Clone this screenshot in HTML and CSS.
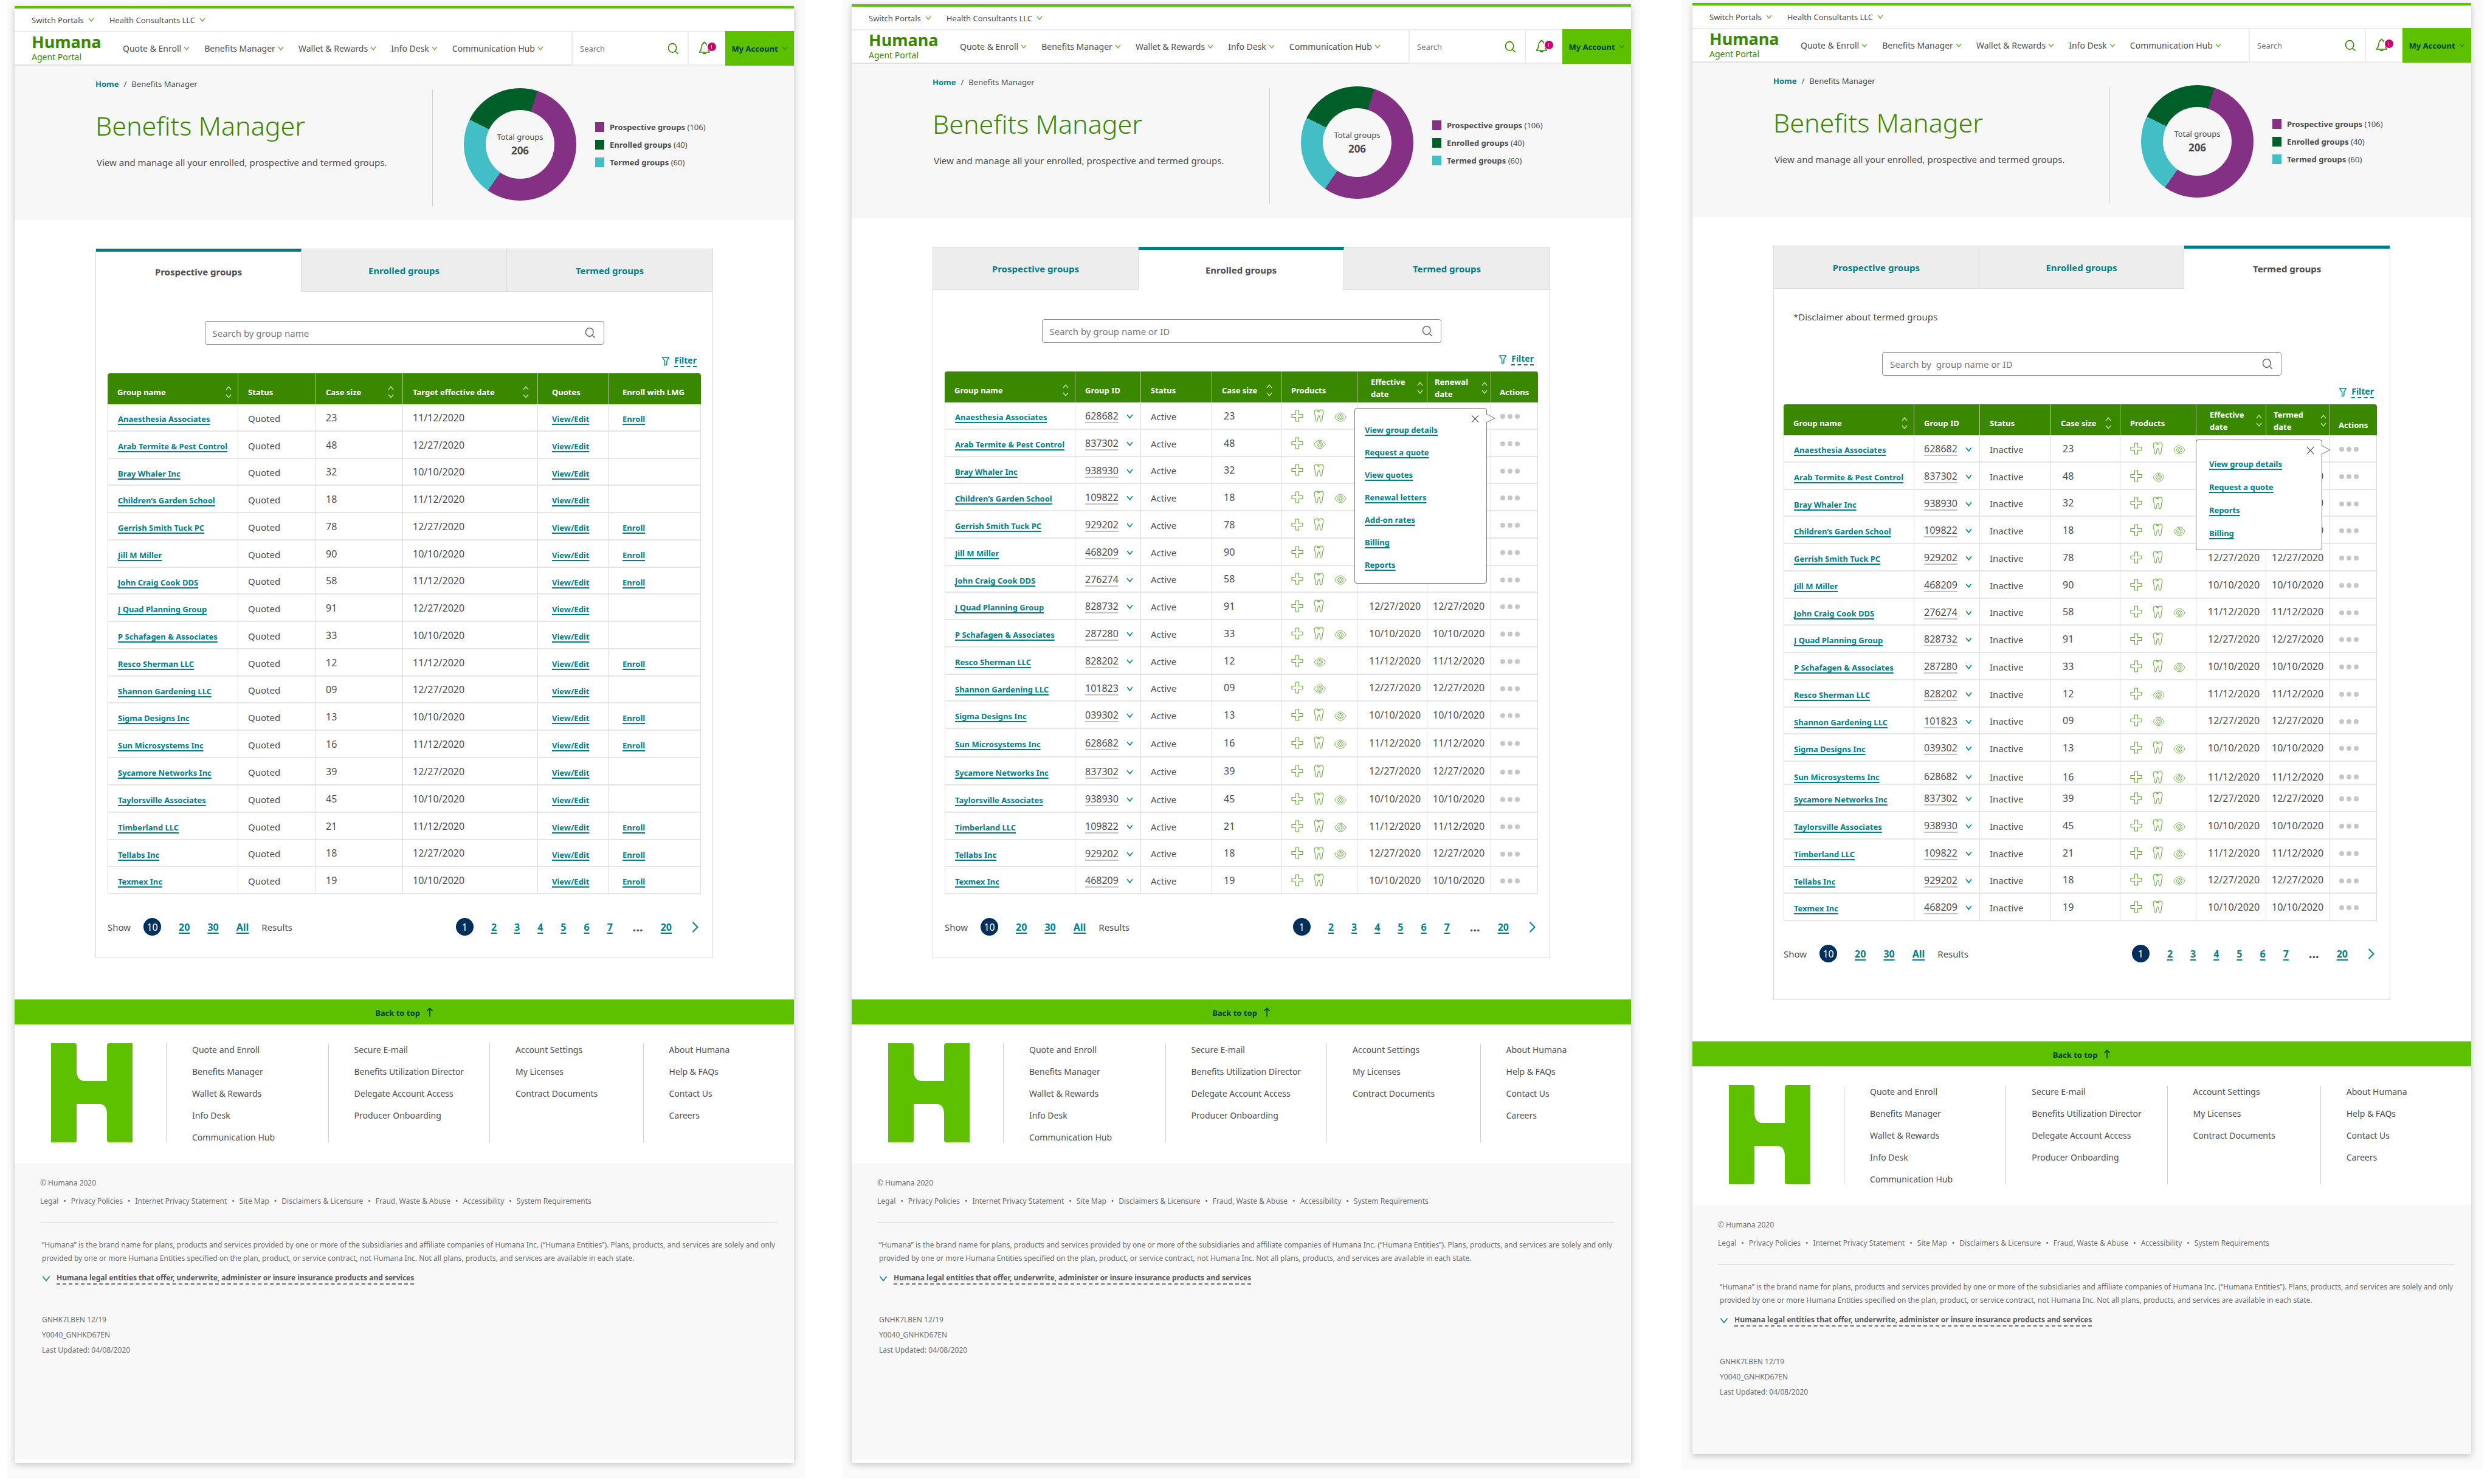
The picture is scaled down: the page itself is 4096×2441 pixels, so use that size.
FILE: index.html
```html
<!DOCTYPE html>
<html lang="en">
<head>
<meta charset="utf-8">
<title>Humana Agent Portal - Benefits Manager</title>
<link rel="stylesheet" href="styles.css">
</head>
<body>
<svg class="sprite" aria-hidden="true">
  <symbol id="chevron" viewBox="0 0 10 7"><path d="M1 1l4 5 4-5" fill="none" stroke="currentColor" stroke-width="1.4"/></symbol>
  <symbol id="sort" viewBox="0 0 12 22"><path d="M2 7l4-5 4 5M2 15l4 5 4-5" fill="none" stroke="currentColor" stroke-width="1.4"/></symbol>
  <symbol id="search" viewBox="0 0 20 20"><path d="M13.2 14.2L18.6 19M15.6 8.8a7 7.6 0 1 1-14 0a7 7.6 0 1 1 14 0z" fill="none" stroke="currentColor" stroke-width="1.7"/></symbol>
  <symbol id="bell" viewBox="0 0 20 22"><path d="M13.5 6.5C13 4 12 3.200 11 3V2.200Q9.800 .600 8.600 2.200V3C5.500 4 5 7 4.800 10.500C4.600 14 3.500 15 1.800 17.200V18H18V17.200L15.500 14" fill="none" stroke="currentColor" stroke-width="1.6"/><path d="M6.500 19h6.600c-.6 3-6 3-6.600 0z" fill="currentColor"/></symbol>
  <symbol id="funnel" viewBox="0 0 14 16"><path d="M1 1h12L9 7v6.500L5.500 15V7z" fill="none" stroke="currentColor" stroke-width="1.5" stroke-linejoin="round"/></symbol>
  <symbol id="medical" viewBox="0 0 20 20"><path d="M7.500 1h5v6.500H19v5h-6.500V19h-5v-6.500H1v-5h6.500z" fill="none" stroke="currentColor" stroke-width="1.200"/></symbol>
  <symbol id="dental" viewBox="0 0 17 21"><path d="M8.500 2.300C6.500 1 4.500.500 2.800 1.500.800 2.900.800 6 1.800 8.600c1 2.900.600 6.400 1.400 9.400.400 2 2.400 2.800 3 .600.600-2.600.400-8.100 2.300-8.100s1.700 5.500 2.300 8.100c.6 2.200 2.600 1.400 3-.6.8-3 .4-6.500 1.400-9.400 1-2.600 1-5.700-1-7.100-1.700-1-3.700-.500-5.700.8zM5.500 2.400c1.500 1.900 4 1.900 5.600.4M8.500 2.300v1.200" fill="none" stroke="currentColor" stroke-width="1.100"/></symbol>
  <symbol id="vision" viewBox="0 0 20 16"><path d="M.8 8C4 3 7 1 10 1s6 2 9.200 7C16 13 13 15 10 15S4 13 .8 8zM14.400 8a4.400 4.400 0 1 1-8.800 0a4.400 4.400 0 1 1 8.800 0zM9.600 4.800c3 1 3.800 5 .6 5.600-2.600.2-2.800-2.200-1.400-3.300.8-.7.900-1.300.8-2.300z" fill="none" stroke="currentColor"/></symbol>
  <symbol id="close" viewBox="0 0 14 14"><path d="M1 1l12 12M13 1L1 13" stroke="currentColor" stroke-width="1.300"/></symbol>
  <symbol id="next" viewBox="0 0 12 18"><path d="M1.500 1l8 8-8 8" fill="none" stroke="currentColor" stroke-width="2"/></symbol>
  <symbol id="up" viewBox="0 0 12 15"><path d="M6 15V2M1.500 6L6 1.500 10.500 6" fill="none" stroke="currentColor" stroke-width="1.600"/></symbol>
</svg>

<main class="board">
  <section class="artboard artboard-first" data-screen="prospective"></section>
  <section class="artboard artboard-second" data-screen="enrolled"></section>
  <section class="artboard artboard-third" data-screen="termed"></section>
</main>

<template id="page-template">
  <div class="page">
    <div class="utility">
      <button class="menu" type="button">Switch Portals <svg class="chevron"><use href="#chevron"/></svg></button>
      <button class="menu" type="button">Health Consultants LLC <svg class="chevron"><use href="#chevron"/></svg></button>
    </div>
    <header class="masthead">
      <a class="brand" href="#"><span class="brand-name">Humana</span><span class="brand-sub">Agent Portal</span></a>
      <nav class="main-nav">
        <button class="menu" type="button">Quote &amp; Enroll <svg class="chevron"><use href="#chevron"/></svg></button>
        <button class="menu" type="button">Benefits Manager <svg class="chevron"><use href="#chevron"/></svg></button>
        <button class="menu" type="button">Wallet &amp; Rewards <svg class="chevron"><use href="#chevron"/></svg></button>
        <button class="menu" type="button">Info Desk <svg class="chevron"><use href="#chevron"/></svg></button>
        <button class="menu" type="button">Communication Hub <svg class="chevron"><use href="#chevron"/></svg></button>
      </nav>
      <label class="site-search"><input type="search" placeholder="Search" aria-label="Search"><svg class="icon-search"><use href="#search"/></svg></label>
      <button class="alerts" type="button" aria-label="Notifications"><svg class="icon-bell"><use href="#bell"/></svg><span class="badge"></span></button>
      <button class="account" type="button">My Account <svg class="chevron"><use href="#chevron"/></svg></button>
    </header>
    <div class="hero">
      <div class="hero-intro">
        <div class="crumbs"><a href="#">Home</a><span>/</span><span>Benefits Manager</span></div>
        <h1>Benefits Manager</h1>
        <p>View and manage all your enrolled, prospective and termed groups.</p>
      </div>
      <div class="donut"><div class="donut-hole"><span>Total groups</span><strong>206</strong></div></div>
      <ul class="legend">
        <li><i class="swatch swatch-prospective"></i><span><b>Prospective groups</b> (106)</span></li>
        <li><i class="swatch swatch-enrolled"></i><span><b>Enrolled groups</b> (40)</span></li>
        <li><i class="swatch swatch-termed"></i><span><b>Termed groups</b> (60)</span></li>
      </ul>
    </div>
    <div class="card"></div>
    <a class="to-top" href="#">Back to top <svg class="icon-up"><use href="#up"/></svg></a>
    <footer>
      <div class="site-links">
        <svg class="monogram" viewBox="0 0 134 163" role="img" aria-label="Humana"><path d="M0 0H39Q42 0 42 4V46Q43 62 55 62H92V4Q92 0 96 0H134V163H96Q92 163 92 159V118Q92 100 80 100H42V159Q42 163 39 163H0Z" fill="#5ec100"/></svg>
        <ul>
          <li><a href="#">Quote and Enroll</a></li><li><a href="#">Benefits Manager</a></li><li><a href="#">Wallet &amp; Rewards</a></li><li><a href="#">Info Desk</a></li><li><a href="#">Communication Hub</a></li>
        </ul>
        <ul>
          <li><a href="#">Secure E-mail</a></li><li><a href="#">Benefits Utilization Director</a></li><li><a href="#">Delegate Account Access</a></li><li><a href="#">Producer Onboarding</a></li>
        </ul>
        <ul>
          <li><a href="#">Account Settings</a></li><li><a href="#">My Licenses</a></li><li><a href="#">Contract Documents</a></li>
        </ul>
        <ul>
          <li><a href="#">About Humana</a></li><li><a href="#">Help &amp; FAQs</a></li><li><a href="#">Contact Us</a></li><li><a href="#">Careers</a></li>
        </ul>
      </div>
      <div class="legal">
        <p class="copyright">© Humana 2020</p>
        <nav class="legal-links">
          <a href="#">Legal</a><i>•</i><a href="#">Privacy Policies</a><i>•</i><a href="#">Internet Privacy Statement</a><i>•</i><a href="#">Site Map</a><i>•</i><a href="#">Disclaimers &amp; Licensure</a><i>•</i><a href="#">Fraud, Waste &amp; Abuse</a><i>•</i><a href="#">Accessibility</a><i>•</i><a href="#">System Requirements</a>
        </nav>
        <p class="disclaimer">“Humana” is the brand name for plans, products and services provided by one or more of the subsidiaries and affiliate companies of Humana Inc. (“Humana Entities”). Plans, products, and services are solely and only<br>provided by one or more Humana Entities specified on the plan, product, or service contract, not Humana Inc. Not all plans, products, and services are available in each state.</p>
        <button class="entities" type="button"><svg class="chevron"><use href="#chevron"/></svg><span>Humana legal entities that offer, underwrite, administer or insure insurance products and services</span></button>
        <p class="codes">GNHK7LBEN 12/19<br>Y0040_GNHKD67EN<br>Last Updated: 04/08/2020</p>
      </div>
    </footer>
  </div>
</template>
<script src="app.js"></script>
</body>
</html>
```
FILE: app.js
```js
// name, case size, group ID, products (m = medical, d = dental, v = vision), can enroll
const groups = [
  ["Anaesthesia Associates", "23", "628682", "mdv", true],
  ["Arab Termite & Pest Control", "48", "837302", "mv", false],
  ["Bray Whaler Inc", "32", "938930", "md", false],
  ["Children’s Garden School", "18", "109822", "mdv", false],
  ["Gerrish Smith Tuck PC", "78", "929202", "md", true],
  ["Jill M Miller", "90", "468209", "md", true],
  ["John Craig Cook DDS", "58", "276274", "mdv", true],
  ["J Quad Planning Group", "91", "828732", "md", false],
  ["P Schafagen & Associates", "33", "287280", "mdv", false],
  ["Resco Sherman LLC", "12", "828202", "mv", true],
  ["Shannon Gardening LLC", "09", "101823", "mv", false],
  ["Sigma Designs Inc", "13", "039302", "mdv", true],
  ["Sun Microsystems Inc", "16", "628682", "mdv", true],
  ["Sycamore Networks Inc", "39", "837302", "md", false],
  ["Taylorsville Associates", "45", "938930", "mdv", false],
  ["Timberland LLC", "21", "109822", "mdv", true],
  ["Tellabs Inc", "18", "929202", "mdv", true],
  ["Texmex Inc", "19", "468209", "md", true]
];
const dates = ["11/12/2020", "12/27/2020", "10/10/2020"];
const products = { m: "medical", d: "dental", v: "vision" };

const screens = {
  prospective: {
    placeholder: "Search by group name",
    columns: [["Group name", 1], ["Status"], ["Case size", 1], ["Target effective date", 1], ["Quotes"], ["Enroll with LMG"]],
    status: "Quoted"
  },
  enrolled: {
    placeholder: "Search by group name or ID",
    columns: [["Group name", 1], ["Group ID"], ["Status"], ["Case size", 1], ["Products"], ["Effective date", 1], ["Renewal date", 1], ["Actions"]],
    status: "Active",
    menu: ["View group details", "Request a quote", "View quotes", "Renewal letters", "Add-on rates", "Billing", "Reports"]
  },
  termed: {
    note: "*Disclaimer about termed groups",
    placeholder: "Search by  group name or ID",
    columns: [["Group name", 1], ["Group ID"], ["Status"], ["Case size", 1], ["Products"], ["Effective date", 1], ["Termed date", 1], ["Actions"]],
    status: "Inactive",
    menu: ["View group details", "Request a quote", "Reports", "Billing"]
  }
};

const icon = (id, cls) => `<svg class="${cls || id}"><use href="#${id}"/></svg>`;
const esc = (text) => text.replace(/&/g, "&amp;");
const link = (text) => `<a href="#">${esc(text)}</a>`;

function row(key, screen, g, i) {
  const date = dates[i % 3];
  const name = `<td class="name">${link(g[0])}</td>`;
  const status = `<td class="status">${screen.status}</td>`;
  const size = `<td class="size">${g[1]}</td>`;
  if (key === "prospective") {
    return `<tr>${name}${status}${size}<td class="size">${date}</td><td class="go">${link("View/Edit")}</td><td class="go">${g[4] ? link("Enroll") : ""}</td></tr>`;
  }
  const icons = [...g[3]].map((p) => icon(products[p])).join("");
  return `<tr>${name}<td class="id"><button type="button"><span>${g[2]}</span>${icon("chevron")}</button></td>${status}${size}
    <td class="products"><div>${icons}</div></td><td class="date">${date}</td><td class="date">${date}</td>
    <td class="actions"><button type="button" aria-label="Actions for ${esc(g[0])}"><i></i><i></i><i></i></button></td></tr>`;
}

function card(key, screen) {
  const tabs = [["prospective", "Prospective groups"], ["enrolled", "Enrolled groups"], ["termed", "Termed groups"]]
    .map(([id, text]) => `<button class="tab${id === key ? " is-active" : ""}" type="button" role="tab" aria-selected="${id === key}">${text}</button>`).join("");
  const head = screen.columns
    .map(([text, sortable]) => `<th scope="col"><div><span>${text}</span>${sortable ? icon("sort") : ""}</div></th>`).join("");
  const body = groups.map((g, i) => row(key, screen, g, i)).join("");
  const menu = screen.menu
    ? `<div class="popover"><button class="popover-close" type="button" aria-label="Close">${icon("close")}</button>
       <svg class="popover-tip" viewBox="0 0 15 14"><path d="M0 0L14 7 0 14" fill="#fff" stroke="#777"/></svg>${screen.menu.map(link).join("")}</div>` : "";
  return `<div class="tabs" role="tablist">${tabs}</div>
    ${screen.note ? `<p class="note">${screen.note}</p>` : ""}
    <label class="group-search"><input type="text" placeholder="${screen.placeholder}" aria-label="Search groups">${icon("search", "icon-search")}</label>
    <div class="filter-row"><button class="filter" type="button">${icon("funnel")}<span>Filter</span></button></div>
    <div class="table-wrap"><table class="${screen.menu ? "managed" : "quoted"}"><thead><tr>${head}</tr></thead><tbody>${body}</tbody></table>${menu}</div>
    <div class="paging">
      <div class="paging-size"><span>Show</span><b class="current">10</b>${["20", "30", "All"].map(link).join("")}<span>Results</span></div>
      <div class="paging-pages"><b class="current">1</b>${["2", "3", "4", "5", "6", "7"].map(link).join("")}<b class="more">...</b>${link("20")}<a class="next-page" href="#" aria-label="Next page">${icon("next")}</a></div>
    </div>`;
}

const template = document.getElementById("page-template");
document.querySelectorAll("[data-screen]").forEach((section) => {
  const key = section.dataset.screen;
  const page = template.content.cloneNode(true);
  page.querySelector(".card").innerHTML = card(key, screens[key]);
  section.append(page);
});
```
FILE: styles.css
```css
* { box-sizing: border-box; }

:root {
  --ink: #4d4d4f;
  --teal: #00818a;
  --green: #5ec100;
  --forest: #3a8700;
  --navy: #003c4b;
  --line: #dcdcdc;
}

body {
  margin: 0;
  background: #fff;
  color: var(--ink);
  font: 14px/20px "Noto Sans", sans-serif;
}

h1, p, ul { margin: 0; padding: 0; }
li { list-style: none; }
a { color: inherit; text-decoration: none; }
button {
  border: 0;
  padding: 0;
  background: none;
  color: inherit;
  font: inherit;
}
input {
  border: 0;
  outline: 0;
  background: none;
  color: inherit;
  font: inherit;
  min-width: 0;
}
input::placeholder { color: #77777a; opacity: 1; }
svg { display: block; flex: none; }
.sprite { position: absolute; width: 0; height: 0; }

/* Artboards */
.board {
  display: grid;
  grid-template-columns: 12px 1311fr 62px 1311fr 70px 1316fr 14px;
  align-items: start;
}
.artboard { background: #fafafa; }
.artboard-first { grid-column: 2; padding: 10px 18px 26px 12px; }
.artboard-second { grid-column: 4; padding: 7px 14px 26px 15px; }
.artboard-third { grid-column: 6; padding: 5px 19px 26px 17px; }

.page {
  border-top: 4px solid var(--green);
  background: #fff;
  box-shadow: 0 3px 10px rgba(0, 0, 0, .22);
}

/* Header */
.menu { display: flex; align-items: center; gap: 7px; }
.chevron { width: 10px; height: 7px; color: #6cab3e; }
.utility {
  display: flex;
  align-items: center;
  gap: 25px;
  height: 37px;
  padding-left: 28px;
  font-size: 13px;
}
.masthead {
  display: flex;
  align-items: stretch;
  height: 57px;
  border-top: 2px solid #ececec;
}
.brand {
  width: 150px;
  padding: 0 0 0 28px;
  color: var(--forest);
}
.brand-name { display: block; font-size: 27px; font-weight: 700; line-height: 32px; }
.brand-sub { display: block; line-height: 18px; }
.main-nav {
  display: flex;
  flex: 1;
  align-items: center;
  gap: 24px;
  padding-left: 28px;
  border-bottom: 2px solid #e2e2e2;
}
.main-nav .menu { gap: 4px; }
.brand { border-bottom: 2px solid #e2e2e2; }
.site-search {
  display: flex;
  align-items: center;
  justify-content: space-between;
  width: 193px;
  padding: 0 14px 0 12px;
  border: solid #ececec;
  border-width: 0 2px 2px;
  font-size: 13px;
}
.site-search input { width: 100px; padding: 0; }
.icon-search { width: 19px; height: 20px; color: var(--forest); }
.alerts {
  position: relative;
  width: 60px;
  border-bottom: 2px solid #ececec;
}
.icon-bell { width: 20px; height: 22px; margin: -2px 0 0 16px; color: var(--forest); }
.badge {
  position: absolute;
  top: 17px;
  left: 31px;
  width: 14px;
  height: 14px;
  border-radius: 50%;
  background: #c8006c;
}
.badge::after {
  content: "";
  position: absolute;
  top: 4px;
  left: 6px;
  width: 1px;
  height: 6px;
  background: #f3b8d8;
}
.account {
  display: flex;
  align-items: center;
  justify-content: center;
  gap: 6px;
  width: 113px;
  margin-top: -2px;
  background: var(--green);
  color: var(--navy);
  font-size: 13px;
  font-weight: 700;
}
.account .chevron { color: var(--forest); }

/* Hero */
.hero {
  display: flex;
  align-items: flex-start;
  height: 254px;
  padding: 0 133px;
  background: #f7f7f7;
}
.hero-intro { flex: 1; padding-top: 20px; }
.crumbs { display: flex; gap: 8px; font-size: 13px; }
.crumbs a { color: var(--teal); font-weight: 700; }
h1 {
  margin-top: 31px;
  color: var(--forest);
  font-size: 43px;
  font-weight: 300;
  line-height: 56px;
}
.hero p { margin: 20px 0 0 2px; font-size: 15px; line-height: 24px; }
.donut {
  position: relative;
  display: flex;
  align-items: center;
  justify-content: center;
  width: 185px;
  height: 185px;
  margin: 37px 31px 0 52px;
  border-radius: 50%;
  background: conic-gradient(#005f28 18deg, #843185 18deg 215deg, #43bec7 215deg 296deg, #005f28 296deg);
}
.donut::before {
  content: "";
  position: absolute;
  top: 3px;
  left: -52px;
  width: 1px;
  height: 191px;
  background: #cfcfcf;
}
.donut-hole {
  display: flex;
  flex-direction: column;
  align-items: center;
  justify-content: center;
  width: 113px;
  height: 113px;
  border-radius: 50%;
  background: #f7f7f7;
  font-size: 13px;
}
.donut-hole strong { font-size: 17px; line-height: 26px; }
.legend { width: 194px; padding-top: 86px; font-size: 13px; }
.legend li { display: flex; align-items: center; gap: 9px; height: 29px; }
.swatch { width: 15px; height: 16px; }
.swatch-prospective { background: #843185; }
.swatch-enrolled { background: #005f28; }
.swatch-termed { background: #43bec7; }

/* Groups card */
.card {
  margin: 47px 133px 68px;
  border: 1px solid var(--line);
  border-top: 0;
  padding-bottom: 36px;
}
.tabs { display: grid; grid-template-columns: 1fr 1fr 1fr; }
.tab {
  height: 71px;
  border: 1px solid var(--line);
  border-width: 1px 1px 1px 0;
  background: #ededed;
  color: var(--teal);
  font-size: 15px;
  font-weight: 700;
}
.tab:last-child { border-right: 0; }
.tab.is-active {
  border-top: 5px solid #007c87;
  border-bottom: 0;
  background: #fff;
  color: var(--ink);
}
.note { padding: 36px 32px 0; font-size: 15px; }
.group-search {
  display: flex;
  align-items: center;
  width: 657px;
  height: 39px;
  margin: 48px auto 17px;
  padding: 0 13px 0 12px;
  border: 1px solid #8a8a8a;
  border-radius: 4px;
  font-size: 15px;
}
.group-search input { flex: 1; padding: 0; }
.group-search .icon-search { width: 18px; height: 19px; color: #666; }
.filter-row { display: flex; justify-content: flex-end; padding: 0 26px; }
.filter {
  display: flex;
  align-items: center;
  gap: 7px;
  height: 20px;
  margin-bottom: 10px;
  color: var(--teal);
  font-size: 14px;
  font-weight: 700;
}
.filter span { line-height: 18px; border-bottom: 2px dashed var(--teal); }
.funnel { width: 14px; height: 15px; }

.table-wrap { position: relative; margin: 0 19px; }
table {
  width: 100%;
  table-layout: fixed;
  border-collapse: separate;
  border-spacing: 0;
}
th {
  height: 51px;
  padding: 0;
  border-right: 1px solid #a9cb8d;
  background: var(--forest);
  color: #fff;
  font-size: 13px;
  font-weight: 700;
  text-align: left;
}
th:first-child { border-top-left-radius: 4px; }
th:last-child { border-top-right-radius: 4px; border-right: 0; }
th div {
  display: flex;
  align-items: center;
  justify-content: space-between;
  padding: 10px 9px 0 16px;
}
.sort { width: 12px; height: 22px; color: #c6dfb3; }
td {
  height: 45px;
  padding: 0 0 0 16px;
  border-right: 1px solid var(--line);
  border-bottom: 2px solid #e6e6e6;
  white-space: nowrap;
}
td:first-child { border-left: 1px solid var(--line); }
tr:nth-child(3) td, tr:nth-child(7) td, tr:nth-child(11) td, tr:nth-child(17) td { height: 44px; }
td a, .popover a, .paging a {
  color: var(--teal);
  font-weight: 700;
  text-decoration: underline;
  text-decoration-thickness: 2px;
  text-underline-offset: 3px;
  text-decoration-skip-ink: none;
}
.name, .go { padding-top: 5px; font-size: 13px; }
.go { padding-left: 23px; }
.status { padding-top: 2px; font-size: 15px; }
.size { font-size: 16px; }

.quoted th:nth-child(1), .managed th:nth-child(1) { width: 215px; }
.quoted th:nth-child(2) { width: 128px; }
.quoted th:nth-child(3) { width: 143px; }
.quoted th:nth-child(4) { width: 222px; }
.quoted th:nth-child(5) { width: 116px; }
.quoted th:nth-child(6) { width: 152px; }
.quoted th:nth-child(n+5) div { padding-left: 23px; }
.quoted th:nth-child(n+3) div { padding-right: 13px; }
.quoted th:nth-child(6) div { padding-right: 0; }

.managed th:nth-child(2) { width: 108px; }
.managed th:nth-child(3) { width: 117px; }
.managed th:nth-child(4) { width: 114px; }
.managed th:nth-child(5) { width: 125px; }
.managed th:nth-child(6) { width: 115px; }
.managed th:nth-child(7) { width: 105px; }
.managed th:nth-child(8) { width: 77px; }
.managed th:nth-child(4) div { padding-right: 13px; }
.managed th:nth-child(6) div { padding: 2px 5px 0 22px; }
.managed th:nth-child(7) div { padding: 2px 4px 0 12px; }
.managed th:nth-child(6) span, .managed th:nth-child(7) span { width: 60px; }
.managed th:nth-child(8) div { padding: 17px 0 0 14px; }
.managed .size { padding-left: 19px; }
.id { padding-top: 3px; }
.id button { display: flex; align-items: center; gap: 13px; font-size: 16px; }
.id span { border-bottom: 2px solid #c4c4c4; }
.id .chevron { width: 11px; height: 8px; color: var(--teal); }
.products div { display: flex; align-items: center; gap: 17px; color: #6cab3e; }
.medical { width: 20px; height: 20px; }
.dental { width: 17px; height: 21px; }
.vision { width: 20px; height: 16px; margin-top: 4px; }
.managed .date { padding-left: 19px; font-size: 16px; }
.managed .date + .date { padding-left: 9px; }
.actions { padding: 3px 0 0 15px; }
.actions button { display: flex; gap: 4px; }
.actions i { width: 8px; height: 8px; border-radius: 50%; background: #c6c6c6; }

/* Row menu */
.popover {
  position: absolute;
  top: 60px;
  right: 84px;
  display: flex;
  flex-direction: column;
  align-items: flex-start;
  gap: 17px;
  width: 218px;
  padding: 25px 16px 20px;
  border: 1px solid #777;
  border-radius: 4px;
  background: #fff;
  font-size: 13px;
}
.popover-close { position: absolute; top: 10px; right: 12px; }
.close { width: 13px; height: 14px; }
.popover-tip { position: absolute; top: 9px; right: -15px; width: 15px; height: 14px; }

/* Paging */
.paging {
  display: flex;
  align-items: center;
  justify-content: space-between;
  margin: 39px 19px 0;
  font-size: 16px;
}
.paging-size, .paging-pages { display: flex; align-items: center; gap: 29px; }
.paging-size > span { font-size: 15px; }
.paging-size span:first-child { margin-right: -8px; }
.paging-size span:last-child { margin-left: -8px; }
.paging-pages { padding-right: 3px; }
.more { padding-left: 4px; font-size: 20px; }
.next-page { padding-left: 4px; }
.current {
  display: flex;
  align-items: center;
  justify-content: center;
  width: 29px;
  height: 29px;
  border-radius: 50%;
  background: #002f5b;
  color: #fff;
  font-weight: 400;
}
.next { width: 12px; height: 18px; }

/* Footer */
.to-top {
  display: flex;
  align-items: center;
  justify-content: center;
  gap: 10px;
  height: 41px;
  padding-top: 3px;
  background: var(--green);
  color: var(--navy);
  font-size: 13px;
  font-weight: 700;
}
.icon-up { width: 12px; height: 15px; margin-top: -4px; }
.site-links {
  display: grid;
  grid-template-columns: 189px 266fr 265fr 252fr 248fr;
  padding: 31px 0 34px 60px;
}
.monogram { width: 134px; height: 163px; }
.site-links ul { padding-left: 42px; border-left: 1px solid #d0d0d0; margin-top: 1px; }
.site-links li { height: 36px; }
.site-links li:last-child { height: 18px; }
.legal {
  padding: 23px 27px 167px 42px;
  background: #f8f8f8;
  color: #6c6c6e;
  font-size: 12px;
}
.legal-links { display: flex; gap: 8px; padding: 10px 0 24px; border-bottom: 2px solid #e4e4e4; }
.legal-links i { font-style: normal; }
.disclaimer { margin: 25px 0 12px 3px; line-height: 22px; white-space: nowrap; }
.entities { display: flex; align-items: center; gap: 10px; margin-left: 3px; color: #58585a; font-weight: 700; }
.entities span { line-height: 18px; border-bottom: 2px dashed #6c6c6e; }
.entities .chevron { width: 14px; height: 10px; color: #2e8d96; }
.codes { margin: 45px 0 0 3px; line-height: 25px; }

/* Termed screen */
.artboard-third .card { padding-bottom: 61px; }
.artboard-third .table-wrap { margin: 0 21px 0 16px; }
.artboard-third .paging { margin: 39px 21px 0 16px; }
.artboard-third .popover { top: 58px; right: 90px; gap: 18px; width: 208px; padding: 29px 21px 17px; }
.artboard-third tr:nth-child(13) td { height: 37px; padding-top: 14px; }
.artboard-third tr:nth-child(13) span { border-color: transparent; }
.artboard-third .legal { padding-bottom: 90px; }
.artboard-first .page, .artboard-second .page { padding-bottom: 6px; }
.artboard-second tr:nth-child(13) td { height: 47px; }
.artboard-second tr:nth-child(14) td { height: 46px; }
```
